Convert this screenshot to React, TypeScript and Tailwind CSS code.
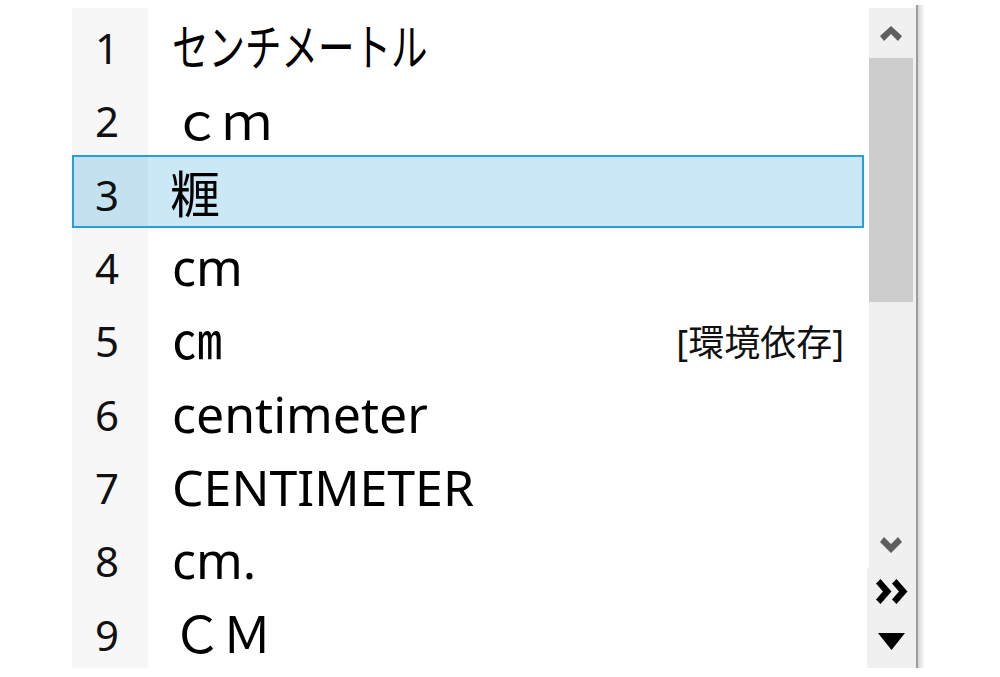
const ROWS: { n: number; text: string; kind?: "kana" | "note" }[] = [
  { n: 1, text: "センチメートル", kind: "kana" },
  { n: 2, text: "ｃｍ" },
  { n: 3, text: "糎" },
  { n: 4, text: "cm" },
  { n: 5, text: "㎝", kind: "note" },
  { n: 6, text: "centimeter" },
  { n: 7, text: "CENTIMETER" },
  { n: 8, text: "cm." },
  { n: 9, text: "ＣＭ" },
];

const SELECTED = 3;

function UpChevron() {
  return (
    <svg width="22" height="15" viewBox="0 0 22 15">
      <path d="M0 10 L11 0 L22 10 L18 15 L11 8 L4 15 Z" fill="#5f5f5f" />
    </svg>
  );
}

function DownChevron() {
  return (
    <svg width="22" height="16" viewBox="0 0 22 16">
      <path d="M0 5 L4 0 L11 7 L18 0 L22 5 L11 16 Z" fill="#5f5f5f" />
    </svg>
  );
}

function DoubleChevron() {
  return (
    <svg width="32" height="25" viewBox="0 0 32 25">
      <path d="M0 4.5 L4.5 0 L15.5 12.5 L4.5 25 L0 20.5 L7 12.5 Z" fill="#000" />
      <path d="M16 4.5 L20.5 0 L31.5 12.5 L20.5 25 L16 20.5 L23 12.5 Z" fill="#000" />
    </svg>
  );
}

function DownTriangle() {
  return (
    <svg width="27" height="17" viewBox="0 0 27 17">
      <path d="M0 0 L27 0 L13.5 17 Z" fill="#000" />
    </svg>
  );
}

function CandidateRow({ row }: { row: (typeof ROWS)[number] }) {
  const selected = row.n === SELECTED;
  return (
    <div
      className={`flex h-[73.33px] items-stretch ${
        selected ? "border-2 border-[#26a0da] bg-[#cbe8f6]" : ""
      }`}
    >
      <div
        className={`flex shrink-0 items-center pt-[6px] text-[42px] text-[#111] ${
          selected ? "w-[74px] bg-[#c4e1f0] pl-[21px]" : "w-[76px] bg-[#f7f7f7] pl-[23px]"
        }`}
      >
        {row.n}
      </div>
      <div
        className={`flex flex-1 items-center pt-[6px] text-[50px] text-black ${
          selected ? "pl-[22px] pr-[18px]" : "pl-[24px] pr-[20px]"
        }`}
      >
        {row.kind === "kana" ? (
          <span className="inline-block origin-left scale-x-[0.73] whitespace-nowrap">{row.text}</span>
        ) : (
          <span className="whitespace-nowrap">{row.text}</span>
        )}
        {row.kind === "note" && (
          <span className="ml-auto pt-[4px] text-[36px] text-[#111]">[環境依存]</span>
        )}
      </div>
    </div>
  );
}

export default function App() {
  return (
    <div
      className="flex h-[677px] w-[1000px] bg-white pl-[72px] pt-[8px]"
      style={{ fontFamily: '"Noto Sans", "Noto Sans CJK JP", sans-serif' }}
    >
      {/* candidate list */}
      <div className="flex h-[660px] w-[792px] flex-col bg-white">
        {ROWS.map((r) => (
          <CandidateRow key={r.n} row={r} />
        ))}
      </div>

      {/* scrollbar + paging */}
      <div className="ml-[3px] flex h-[660px] w-[49px] flex-col">
        <div className="ml-[2px] flex h-[560px] flex-col bg-[#f0f0f0]">
          <div className="flex h-[50px] items-center justify-center pr-[3px]">
            <UpChevron />
          </div>
          <div className="mr-[3px] h-[244px] bg-[#cdcdcd]" />
          <div className="flex flex-1 items-end justify-center pb-[15px] pr-[3px]">
            <DownChevron />
          </div>
        </div>
        <div className="flex flex-1 flex-col items-center bg-[#f0f0f0] pt-[10px]">
          <div className="flex h-[26px] items-center">
            <DoubleChevron />
          </div>
          <div className="mt-[29px] flex h-[17px] items-center">
            <DownTriangle />
          </div>
        </div>
      </div>

      {/* window edge and shadow */}
      <div className="-mt-[3px] h-[663px] w-[2px] bg-[#9c9c9c]" />
      <div className="-mt-[3px] h-[663px] w-[7px] bg-gradient-to-r from-[#d6d6d6] to-white" />
    </div>
  );
}
